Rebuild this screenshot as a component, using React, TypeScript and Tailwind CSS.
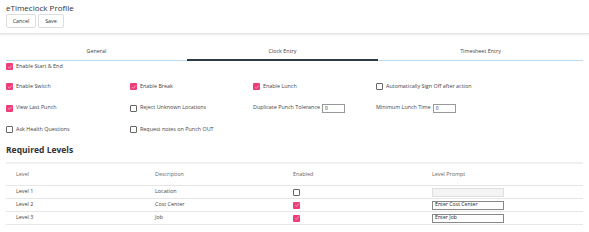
import React from "react";

const font = { fontFamily: '"Open Sans", "Noto Sans", sans-serif' };

function Check({ on }: { on: boolean }) {
  return on ? (
    <span className="inline-flex h-[7px] w-[7px] shrink-0 items-center justify-center rounded-[1px] bg-[#ee3d79]">
      <svg viewBox="0 0 8 8" className="h-[6px] w-[6px]">
        <path d="M1.5 4.3 L3.2 5.8 L6.5 2" fill="none" stroke="#ffd0e0" strokeWidth="0.9" />
      </svg>
    </span>
  ) : (
    <span className="inline-block h-[7px] w-[7px] shrink-0 rounded-[1px] border border-[#666] bg-white" />
  );
}

function Opt({ on, label }: { on: boolean; label: string }) {
  return (
    <div className="flex items-center gap-[3px]">
      <Check on={on} />
      <span className="text-[5.4px] leading-none text-[#444]">{label}</span>
    </div>
  );
}

function NumField({ label }: { label: string }) {
  return (
    <div className="flex items-center gap-[2px]">
      <span className="text-[5.4px] leading-none text-[#444]">{label}</span>
      <span className="flex h-[9px] w-[23px] items-center border border-[#999] bg-white pl-[2px] text-[5px] leading-none text-[#333]">
        0
      </span>
    </div>
  );
}

export default function App() {
  const rows = [
    { level: "Level 1", desc: "Location", on: false, prompt: "" },
    { level: "Level 2", desc: "Cost Center", on: true, prompt: "Enter Cost Center" },
    { level: "Level 3", desc: "Job", on: true, prompt: "Enter Job" },
  ];
  return (
    <div className="h-[232px] w-[589px] overflow-hidden bg-white text-[#444]" style={font}>
      <div className="border-b border-[#e2e2e2] px-[6px] pt-[3px] pb-[5px] shadow-[0_1px_2px_rgba(0,0,0,0.08)]">
        <div className="text-[8px] leading-[9px] text-[#333]">eTimeclock Profile</div>
        <div className="mt-[2px] flex gap-[2px]">
          <button className="flex h-[14px] w-[30px] items-center justify-center rounded-[2px] border border-[#ddd] bg-white text-[5.4px] text-[#333]">
            Cancel
          </button>
          <button className="flex h-[14px] w-[26px] items-center justify-center rounded-[2px] border border-[#ddd] bg-white text-[5.4px] text-[#333]">
            Save
          </button>
        </div>
      </div>

      <div className="px-[6px]">
        <div className="mt-[14px] grid grid-cols-[181px_191px_1fr] border-b border-[#b9dcf4]">
          <div className="pb-[6px] text-center text-[5.4px] leading-[6px] text-[#444]">General</div>
          <div className="-mb-px border-b-2 border-[#2e3b47] pb-[5px] text-center text-[5.4px] leading-[6px] text-[#444]">
            Clock Entry
          </div>
          <div className="pb-[6px] text-center text-[5.4px] leading-[6px] text-[#444]">Timesheet Entry</div>
        </div>

        <div className="mt-[2px]">
          <Opt on label="Enable Start & End" />
        </div>

        <div className="mt-[13px] grid grid-cols-[124px_123px_123px_1fr] gap-y-[13.5px]">
          <Opt on label="Enable Switch" />
          <Opt on label="Enable Break" />
          <Opt on label="Enable Lunch" />
          <Opt on={false} label="Automatically Sign Off after action" />
          <Opt on label="View Last Punch" />
          <Opt on={false} label="Reject Unknown Locations" />
          <NumField label="Duplicate Punch Tolerance" />
          <NumField label="Minimum Lunch Time" />
          <Opt on={false} label="Ask Health Questions" />
          <Opt on={false} label="Request notes on Punch OUT" />
        </div>

        <div className="mt-[12px] text-[8.5px] font-bold leading-[10px] text-[#333]">Required Levels</div>

        <div className="mt-[7px] w-[577px] border-t-2 border-[#f0f0f0]">
          <div className="grid h-[22px] grid-cols-[139px_138px_139px_1fr] items-center border-b border-[#e6e6e6] pl-[10px] text-[5.4px] leading-none text-[#666]">
            <div>Level</div>
            <div>Description</div>
            <div>Enabled</div>
            <div>Level Prompt</div>
          </div>
          {rows.map((r) => (
            <div
              key={r.level}
              className="grid h-[13px] grid-cols-[139px_138px_139px_1fr] items-center border-b border-[#e6e6e6] pl-[10px] text-[5.4px] leading-none text-[#444]"
            >
              <div>{r.level}</div>
              <div>{r.desc}</div>
              <div className="flex">
                <Check on={r.on} />
              </div>
              <div>
                {r.prompt ? (
                  <div className="flex h-[9px] w-[72px] items-center border border-[#888] bg-white pl-[2px] text-[5.2px] text-[#222]">
                    {r.prompt}
                  </div>
                ) : (
                  <div className="h-[9px] w-[72px] border border-[#e0e0e0] bg-[#f4f4f4]" />
                )}
              </div>
            </div>
          ))}
        </div>
      </div>
    </div>
  );
}
